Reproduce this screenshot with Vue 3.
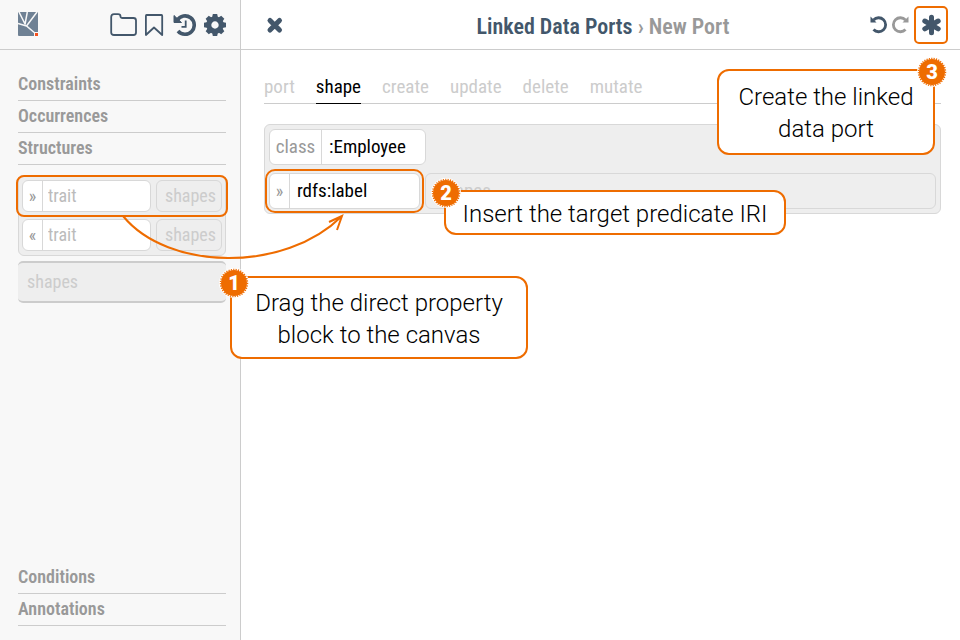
<script setup>
import { ref } from 'vue'

const tabs = ['port', 'shape', 'create', 'update', 'delete', 'mutate']
const active = ref('shape')
const traits = [
  { mark: '»', label: 'Direct trait', picked: true },
  { mark: '«', label: 'Inverse trait', picked: false },
]
const className = ref(':Employee')
const property = ref('rdfs:label')
</script>

<template>
  <div class="app">
    <aside class="side">
      <header class="bar side-bar">
        <a class="logo" href="#" aria-label="Home">
          <svg width="21" height="25" viewBox="0 0 21 25">
            <rect width="20" height="24" rx="1" fill="#6f8194" />
            <path d="M0 11.500 L8.500 14 L18 22 M1 0 L7 12 M9.300 0 L7 12.500 M19 0 L8.500 14" fill="none" stroke="#f8f8f8" stroke-width="1.500" />
            <rect x="16" y="20" width="5" height="5" fill="#f8f8f8" />
            <rect x="17" y="21" width="3" height="3" fill="#f4511e" />
          </svg>
        </a>
        <nav class="tools" aria-label="Tools">
          <button aria-label="Open">
            <svg width="28" height="24" viewBox="0 0 28 24">
              <path d="M1.200 4 Q1.200 1.200 4 1.200 H8 Q10.500 1.200 10.500 3.500 Q10.500 5 12.500 5 H23.500 Q26 5 26 7.500 V19.500 Q26 22 23.500 22 H4 Q1.200 22 1.200 19.500 Z" fill="none" stroke="#43576b" stroke-width="1.800" />
            </svg>
          </button>
          <button aria-label="Bookmarks">
            <svg width="20" height="24" viewBox="0 0 20 24">
              <path d="M1.500 2 H16.500 Q17.200 2 17.200 3 V22 L9 14.500 L0.900 22 V3 Q0.900 2 1.500 2 Z" fill="none" stroke="#43576b" stroke-width="1.800" stroke-linejoin="round" />
            </svg>
          </button>
          <button aria-label="History">
            <svg width="24" height="24" viewBox="0 0 24 24">
              <path d="M5.200 7.200 A9.200 9.200 0 1 1 6 18" fill="none" stroke="#43576b" stroke-width="3.600" />
              <path d="M2 2.500 V9.500 H9.500 Z" fill="#43576b" stroke="#43576b" stroke-linejoin="round" />
              <path d="M13.700 7.500 V13.800 H9.500" fill="none" stroke="#43576b" stroke-width="1.800" />
            </svg>
          </button>
          <button aria-label="Settings">
            <svg width="24" height="24" viewBox="-12 -12 24 24">
              <g fill="#43576b">
                <path v-for="n in 8" :key="n" :transform="`rotate(${n * 45})`" d="M-3 -7 L-2.200 -11 H2.200 L3 -7 Z" />
              </g>
              <circle r="6.200" fill="none" stroke="#43576b" stroke-width="5" />
            </svg>
          </button>
        </nav>
      </header>
      <div class="side-body">
        <h2>Constraints</h2>
        <h2>Occurrences</h2>
        <h2>Structures</h2>
        <div class="blocks">
          <div v-for="t in traits" :key="t.mark" class="block" :class="{ picked: t.picked }">
            <label class="field">
              <span class="mark">{{ t.mark }}</span>
              <input type="text" placeholder="trait" :aria-label="t.label" />
            </label>
            <button class="slot">shapes</button>
          </div>
        </div>
        <button class="shapes">shapes</button>
        <div class="side-foot">
          <h2>Conditions</h2>
          <h2>Annotations</h2>
        </div>
      </div>
    </aside>

    <main class="main">
      <header class="bar main-bar">
        <button aria-label="Close">
          <svg width="18" height="18" viewBox="0 0 18 18">
            <path d="M4 4.500 L13.500 14 M13.500 4.500 L4 14" stroke="#43576b" stroke-width="5" stroke-linecap="round" />
          </svg>
        </button>
        <h1><a href="#">Linked Data Ports</a> › New Port</h1>
        <div class="actions">
          <button aria-label="Undo">
            <svg width="19" height="19" viewBox="0 0 19 19">
              <path d="M4.500 5 A7 7 0 1 1 4.500 14.500" fill="none" stroke="#43576b" stroke-width="2.800" />
              <path d="M1.500 1.500 V7.500 H7.500 Z" fill="#43576b" />
            </svg>
          </button>
          <button aria-label="Redo">
            <svg width="19" height="19" viewBox="0 0 19 19">
              <path d="M15.500 5 A7 7 0 1 0 15.500 14.500" fill="none" stroke="#999" stroke-width="2.800" />
              <path d="M18.500 1.500 V7.500 H12.500 Z" fill="#999" />
            </svg>
          </button>
          <button class="create" aria-label="Create">
            <svg width="22" height="22" viewBox="-11 -11 22 22">
              <path d="M0.500 -7.700 V7.700 M-6.200 -4 L7.200 3.800 M-6.200 3.800 L7.200 -4" stroke="#43576b" stroke-width="5" stroke-linecap="round" />
            </svg>
          </button>
        </div>
      </header>
      <section class="content">
        <nav class="tabs">
          <button v-for="t in tabs" :key="t" :class="{ active: t === active }" @click="active = t">{{ t }}</button>
        </nav>
        <div class="canvas">
          <label class="field class-field">
            <span class="key">class</span>
            <input v-model="className" type="text" />
          </label>
          <div class="row">
            <label class="field prop-field">
              <span class="mark">»</span>
              <input v-model="property" type="text" aria-label="Property" />
            </label>
            <button class="slot wide">shapes</button>
          </div>
        </div>
      </section>
    </main>

    <svg class="arrow" width="250" height="60" viewBox="0 0 250 60" aria-hidden="true">
      <path d="M3 3 C48 58 165 60 222 3 M209 9 L222 3 L217 17" fill="none" stroke="#ee6c00" stroke-width="2" />
    </svg>

    <div class="callout one">
      <span class="badge"><svg viewBox="-15 -15 30 30"><circle class="halo" r="15" /><circle class="disc" r="13" /><circle class="teeth" r="13.5" /></svg><b>1</b></span>
      Drag the direct property<br />block to the canvas
    </div>
    <div class="callout two">
      <span class="badge"><svg viewBox="-15 -15 30 30"><circle class="halo" r="15" /><circle class="disc" r="13" /><circle class="teeth" r="13.5" /></svg><b>2</b></span>
      Insert the target predicate IRI
    </div>
    <div class="callout three">
      <span class="badge"><svg viewBox="-15 -15 30 30"><circle class="halo" r="15" /><circle class="disc" r="13" /><circle class="teeth" r="13.5" /></svg><b>3</b></span>
      Create the linked<br />data port
    </div>
  </div>
</template>

<style>
body {
  margin: 0;
  background: #fff;
}
</style>

<style scoped>
.app {
  position: relative;
  display: flex;
  min-height: 100vh;
  overflow: hidden;
  font-family: "Roboto Condensed", "Liberation Sans Narrow", Roboto, sans-serif;
  font-size: 19px;
  line-height: 24px;
  color: #000;
}
.app * {
  box-sizing: border-box;
}
button,
input {
  margin: 0;
  padding: 0;
  border: 0;
  background: none;
  font: inherit;
  color: inherit;
}
button {
  cursor: pointer;
}
svg {
  display: block;
}
.side {
  display: flex;
  flex-direction: column;
  flex: none;
  width: 241px;
  background: #f8f8f8;
  border-right: 1px solid #ccc;
  font-size: 18px;
}
.bar {
  display: flex;
  align-items: center;
  height: 50px;
  border-bottom: 1px solid #ccc;
}
.side-bar {
  justify-content: space-between;
  padding: 0 13px 0 18px;
}
.tools {
  display: flex;
  gap: 7px;
}
.side-body {
  display: flex;
  flex: 1;
  flex-direction: column;
  padding: 19px 14px 14px 18px;
}
h2 {
  margin: 0;
  height: 32px;
  padding-top: 3px;
  border-bottom: 1px solid #ccc;
  font-size: 18px;
  line-height: 24px;
  font-weight: 600;
  color: #999;
}
.blocks {
  display: flex;
  flex-direction: column;
  gap: 7px;
  margin-top: 10px;
  padding: 4px 2px;
  border: 1px solid #d8d8d8;
  border-radius: 6px;
  background: #eee;
}
.block {
  display: flex;
  gap: 5px;
  padding: 0 1px;
  border-radius: 3px;
}
.picked {
  outline: 2px solid #ee6c00;
  outline-offset: 3px;
}
.field {
  display: flex;
  align-items: stretch;
  flex: 1;
  min-width: 0;
  height: 32px;
  border: 1px solid #d8d8d8;
  border-radius: 6px;
  background: #fff;
}
.mark,
.key {
  display: flex;
  align-items: center;
  justify-content: center;
  flex: none;
  width: 20px;
  border-right: 1px solid #d8d8d8;
  color: #999;
}
.mark {
  font-size: 18px;
}
.key {
  width: 52px;
}
.field input {
  flex: 1;
  min-width: 0;
  padding-left: 5px;
  outline: none;
}
.canvas .field input {
  padding-left: 7px;
}
.field input::placeholder {
  color: #bbb;
  opacity: 1;
}
.slot {
  width: 66px;
  height: 32px;
  padding-right: 5px;
  border: 1px solid #d8d8d8;
  border-radius: 6px;
  text-align: right;
  color: #ccc;
}
.shapes {
  height: 42px;
  margin-top: 5px;
  padding-left: 9px;
  border-width: 2px 0;
  border-style: solid;
  border-color: #ccc;
  border-radius: 5px;
  background: #eee;
  text-align: left;
  color: #ccc;
}
.side-foot {
  margin-top: auto;
}
.main {
  flex: 1;
  min-width: 0;
}
.main-bar {
  display: grid;
  grid-template-columns: 1fr auto 1fr;
  padding: 0 12px 0 25px;
}
.main-bar > button {
  justify-self: start;
}
h1 {
  margin: 0;
  padding: 4px 8px 0 0;
  font-size: 22px;
  line-height: 28px;
  font-weight: 600;
  color: #999;
}
h1 a {
  color: #43576b;
  text-decoration: none;
}
.actions {
  display: flex;
  align-items: center;
  justify-self: end;
  gap: 2px;
}
.create {
  display: grid;
  place-items: center;
  width: 34px;
  height: 38px;
  margin-left: 3px;
  border: 2px solid #ee6c00;
  border-radius: 5px;
}
.content {
  padding: 24px 19px 24px 23px;
}
.tabs {
  display: flex;
  gap: 21px;
  border-bottom: 1px solid #ccc;
}
.tabs button {
  height: 30px;
  margin-bottom: -1px;
  padding-bottom: 4px;
  border-bottom: 1px solid transparent;
  color: #ccc;
}
.tabs .active {
  border-color: #000;
  color: #000;
}
.canvas {
  display: flex;
  flex-direction: column;
  gap: 8px;
  margin-top: 20px;
  padding: 4px;
  border: 1px solid #d8d8d8;
  border-radius: 6px;
  background: #eee;
}
.canvas .field,
.canvas .slot {
  height: 36px;
}
.canvas .class-field {
  flex: none;
  width: 157px;
}
.row {
  display: flex;
  gap: 5px;
}
.canvas .prop-field {
  flex: none;
  width: 151px;
  outline: 2px solid #ee6c00;
  outline-offset: 2px;
}
.canvas .wide {
  flex: 1;
  padding-left: 11px;
  text-align: left;
}
.arrow {
  position: absolute;
  left: 120px;
  top: 213px;
}
.callout {
  position: absolute;
  border: 2px solid #ee6c00;
  border-radius: 12px;
  background: #fff;
  font-family: Roboto, sans-serif;
  font-size: 24px;
  line-height: 32px;
  font-weight: 300;
  text-align: center;
  white-space: nowrap;
}
.one {
  left: 230px;
  top: 276px;
  width: 298px;
  padding: 9px 0 6px;
}
.two {
  left: 444px;
  top: 190px;
  width: 342px;
  padding: 6px 0 3px;
}
.three {
  left: 717px;
  top: 69px;
  width: 218px;
  padding: 10px 0 8px;
}
.badge {
  position: absolute;
  left: -15px;
  top: -14px;
  display: grid;
  place-items: center;
  width: 30px;
  height: 30px;
}
.one .badge {
  left: -13px;
  top: -10px;
}
.three .badge {
  left: auto;
  right: -14px;
}
.badge svg,
.badge b {
  grid-area: 1 / 1;
}
.badge svg {
  width: 30px;
  height: 30px;
}
.badge b {
  font-size: 20px;
  line-height: 24px;
  font-weight: 900;
  color: #fff;
}
.halo {
  fill: #fff;
}
.disc {
  fill: #ee6c00;
}
.teeth {
  fill: none;
  stroke: #ee6c00;
  stroke-width: 1.5;
  stroke-dasharray: 1.2 1.2;
}
</style>
